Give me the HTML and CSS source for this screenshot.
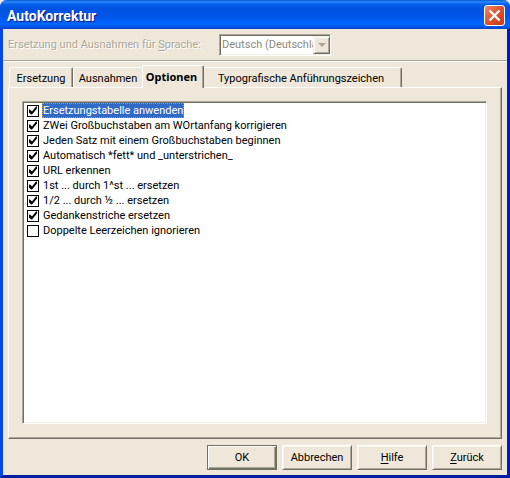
FILE: index.html
```html
<!DOCTYPE html>
<html lang="de">
<head>
<meta charset="utf-8">
<title>AutoKorrektur</title>
<link rel="stylesheet" href="styles.css">
</head>
<body>
<main class="window">
  <header class="titlebar">
    <h1 class="title">AutoKorrektur</h1>
    <button class="close" type="button" aria-label="Schließen">
      <svg viewBox="0 0 21 21" width="21" height="21" aria-hidden="true"><path d="M5.500 5.500l10 10M15.500 5.500l-10 10" stroke="#fff" stroke-width="2.4" fill="none"/></svg>
    </button>
  </header>
  <div class="language">
    <label class="language-label" for="lang">Ersetzung und Ausnahmen für <u>S</u>prache:</label>
    <div class="combo">
      <select id="lang" disabled><option>Deutsch (Deutschland)</option></select>
      <span class="combo-arrow"><svg viewBox="0 0 8 4" width="8" height="4" aria-hidden="true"><path d="M0 0h8L4 4z" fill="#a7a595"/></svg></span>
    </div>
  </div>
  <div class="tabs" role="tablist">
    <button class="tab" type="button" role="tab">Ersetzung</button>
    <button class="tab" type="button" role="tab">Ausnahmen</button>
    <button class="tab active" type="button" role="tab" aria-selected="true">Optionen</button>
    <button class="tab wide" type="button" role="tab">Typografische Anführungszeichen</button>
  </div>
  <section class="panel" role="tabpanel">
    <div class="list">
      <label class="item"><input type="checkbox" checked><span class="selected">Ersetzungstabelle anwenden</span></label>
      <label class="item"><input type="checkbox" checked><span>ZWei Großbuchstaben am WOrtanfang korrigieren</span></label>
      <label class="item"><input type="checkbox" checked><span>Jeden Satz mit einem Großbuchstaben beginnen</span></label>
      <label class="item"><input type="checkbox" checked><span>Automatisch *fett* und _unterstrichen_</span></label>
      <label class="item"><input type="checkbox" checked><span>URL erkennen</span></label>
      <label class="item"><input type="checkbox" checked><span>1st ... durch 1^st ... ersetzen</span></label>
      <label class="item"><input type="checkbox" checked><span>1/2 ... durch ½ ... ersetzen</span></label>
      <label class="item"><input type="checkbox" checked><span>Gedankenstriche ersetzen</span></label>
      <label class="item"><input type="checkbox"><span>Doppelte Leerzeichen ignorieren</span></label>
    </div>
  </section>
  <footer class="actions">
    <button class="action default" type="button">OK</button>
    <button class="action" type="button">Abbrechen</button>
    <button class="action" type="button"><u>H</u>ilfe</button>
    <button class="action" type="button"><u>Z</u>urück</button>
  </footer>
</main>
</body>
</html>
```
FILE: styles.css
```css
* { box-sizing: border-box; }
body {
  margin: 0;
  background: #f1ede4;
  color: #000;
  font: 11px/15px Roboto, "Liberation Sans", sans-serif;
}
button, select, input { margin: 0; font: inherit; color: inherit; }
u { text-underline-offset: 2px; text-decoration-skip-ink: none; }
.window {
  display: flex;
  flex-direction: column;
  min-height: 100vh;
  border: solid #0831d9;
  border-width: 0 3px 3px;
  border-color: #0831d9 #0019cf #001ea0 #0845e6;
  border-radius: 7px 7px 0 0;
  background: #eee7da;
}
.titlebar {
  display: flex;
  align-items: center;
  justify-content: space-between;
  height: 29px;
  margin: 0 -3px;
  padding: 2px 5px 0 7px;
  border-radius: 7px 7px 0 0;
  background: linear-gradient(#0958d0 0, #2a8cff 2px, #0560ec 4px, #0052e0 9px, #0054e8 16px, #0066ff 24px, #005bf0 26px, #003fc8 29px);
}
.title {
  margin: 0;
  color: #fff;
  font: bold 14px/18px Roboto, "Liberation Sans", sans-serif;
  text-shadow: 1px 1px 0 #0a1883;
}
.close {
  width: 21px;
  height: 21px;
  padding: 0;
  border: 1px solid #fff;
  border-radius: 3px;
  background: linear-gradient(135deg, #ee8a6c, #e0502c 50%, #c53a14);
}
.close svg { display: block; margin: -1px; }
.language {
  display: flex;
  align-items: center;
  height: 32px;
  padding: 0 5px;
  border-bottom: 1px solid #a9a595;
  box-shadow: 0 1px #fff;
}
.language-label {
  width: 211px;
  color: #aca899;
  text-shadow: 1px 1px 0 #fff;
}
.combo {
  display: flex;
  width: 112px;
  height: 22px;
  border: 1px solid;
  border-color: #aca899 #fff #fff #aca899;
  background: #fff;
  box-shadow: inset 1px 1px #716f64, inset -1px -1px #f1efe2;
}
.combo select {
  flex: 1;
  min-width: 0;
  padding: 0 0 0 2px;
  border: 0;
  background: none;
  color: #8d8a7d;
  opacity: 1;
  appearance: none;
  overflow: hidden;
  text-overflow: clip;
}
.combo-arrow {
  display: flex;
  align-items: center;
  justify-content: center;
  width: 17px;
  margin: 1px 0 1px;
  border: 1px solid;
  border-color: #f1efe2 #716f64 #716f64 #f1efe2;
  background: #eee7da;
  box-shadow: inset 1px 1px #fff, inset -1px -1px #aca899;
}
.tabs {
  display: flex;
  align-items: flex-end;
  height: 26px;
  padding: 0 6px;
}
.tab {
  height: 20px;
  width: 64px;
  padding: 1px 0 0;
  border: solid;
  border-width: 1px 1px 0;
  border-color: #fff #716f64 #fff #fff;
  border-radius: 2px 2px 0 0;
  background: #eee7da;
  box-shadow: inset -1px 0 #aca899;
  white-space: nowrap;
}
.tab:nth-child(2) { width: 69px; border-right: 0; box-shadow: none; }
.tab.active {
  z-index: 1;
  width: 62px;
  height: 23px;
  margin-bottom: -1px;
  padding: 0 3px 2px 0;
  font-family: "Noto Sans", sans-serif;
  font-weight: bold;
}
.tab.wide { width: 198px; padding-right: 3px; border-left: 0; }
.panel {
  display: flex;
  flex: 1;
  margin: 0 5px;
  padding: 13px 14px 14px 13px;
  border: 1px solid;
  border-color: #fff #716f64 #716f64 #fff;
  box-shadow: inset -1px -1px #aca899;
}
.list {
  flex: 1;
  padding: 1px 4px;
  border: 1px solid;
  border-color: #aca899 #fff #fff #aca899;
  background: #fff;
  box-shadow: inset 1px 1px #716f64, inset -1px -1px #f1efe2;
}
.item {
  display: flex;
  align-items: center;
  gap: 3px;
  height: 15px;
}
.item span { padding: 1px 1px 0; line-height: 14px; white-space: nowrap; }
.item .selected {
  background: #316ac5;
  color: #fff;
  outline: 1px dotted #ce953a;
  outline-offset: -1px;
}
.item input {
  width: 12px;
  height: 12px;
  appearance: none;
  border: 1px solid #000;
  background: #fff;
}
.item input:checked::before {
  content: "";
  display: block;
  width: 10px;
  height: 10px;
  background: #000;
  clip-path: polygon(1px 4px, 2px 4px, 4px 6px, 8px 1px, 9px 1px, 9px 3px, 4px 9px, 3px 9px, 1px 7px);
}
.actions {
  display: flex;
  justify-content: flex-end;
  gap: 5px;
  padding: 6px 5px 5px;
}
.action {
  width: 70px;
  height: 25px;
  padding: 0;
  border: 1px solid;
  border-color: #fff #716f64 #716f64 #fff;
  background: #eee7da;
  box-shadow: inset 1px 1px #f6f3e9, inset -1px -1px #aca899;
}
.action.default {
  border-color: #716f64;
  box-shadow: inset 1px 1px #fff, inset -1px -1px #716f64, inset -2px -2px #aca899;
}
```
